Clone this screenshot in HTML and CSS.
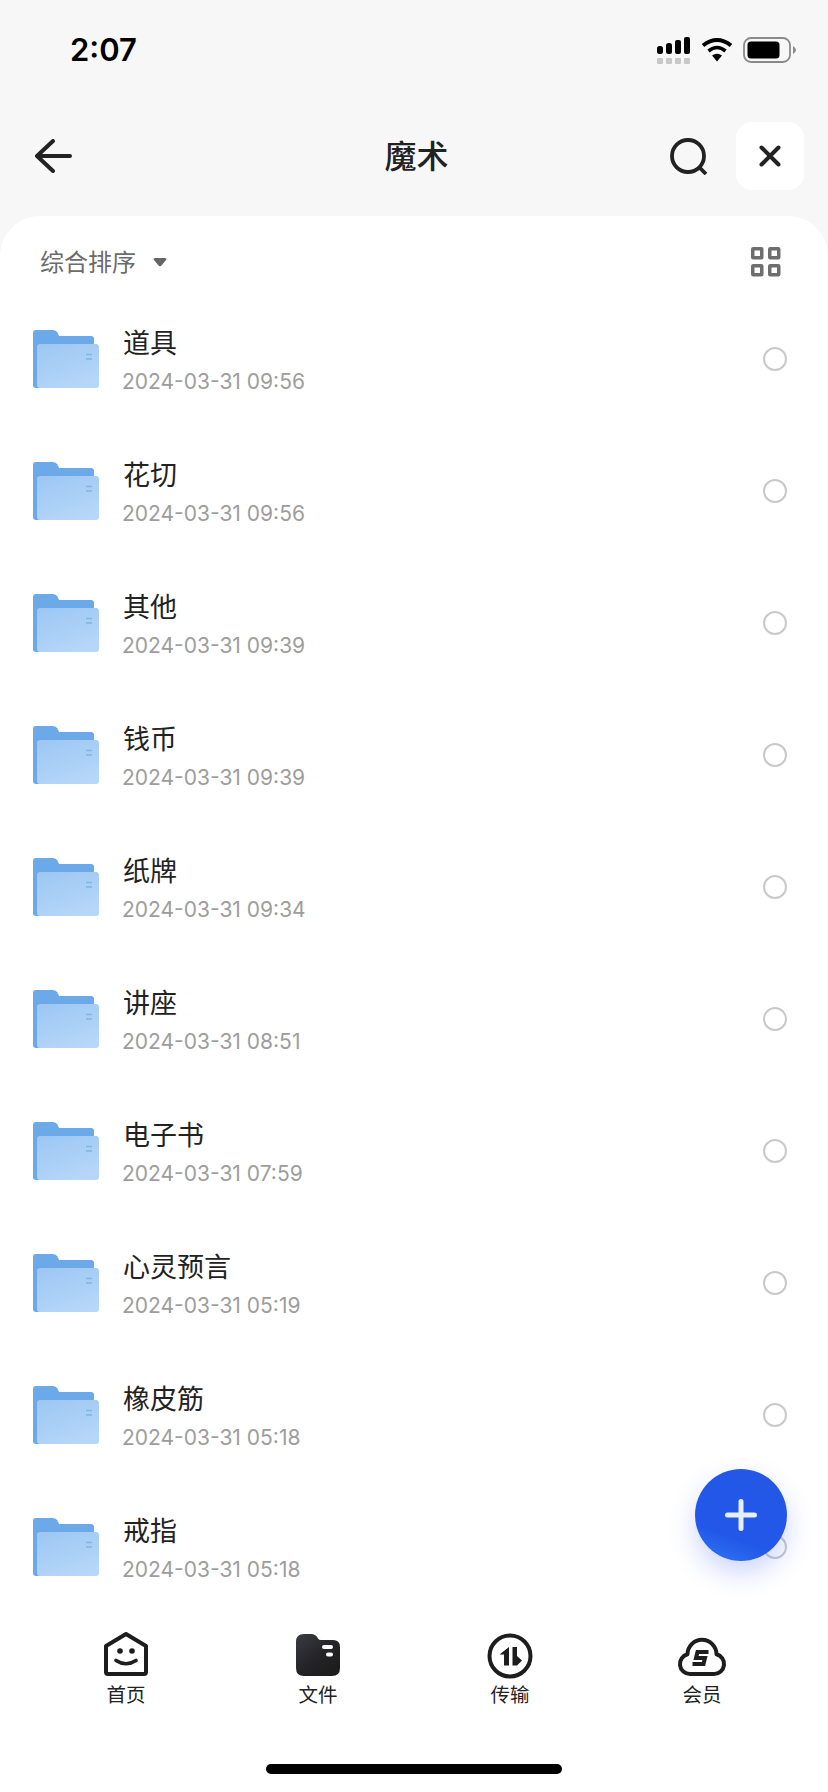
FILE: index.html
```html
<!DOCTYPE html>
<html lang="zh-CN">
<head>
    <meta charset="UTF-8">
    <meta name="viewport" content="width=device-width, initial-scale=1.0">
    <title>魔术</title>
    <link rel="stylesheet" href="styles.css">
</head>
<body>
    <svg class="defs" width="0" height="0" aria-hidden="true">
        <defs>
            <linearGradient id="folder-front" x1="0.2" y1="0" x2="0.7" y2="1">
                <stop offset="0" stop-color="#9ec8f3"/>
                <stop offset="1" stop-color="#b6d7f9"/>
            </linearGradient>
            <linearGradient id="tab-file" x1="0" y1="0" x2="0.8" y2="1">
                <stop offset="0" stop-color="#3a3b44"/>
                <stop offset="0.6" stop-color="#232326"/>
                <stop offset="1" stop-color="#1c1c1c"/>
            </linearGradient>
            <symbol id="folder" viewBox="0 0 66 58">
                <path d="M3 0H20Q23 0 24.500 2.500L26 6H58Q61 6 61 9V58H3Q0 58 0 55V3Q0 0 3 0Z" fill="#6ba9e9"/>
                <rect x="4" y="14" width="62" height="44" rx="3" fill="url(#folder-front)"/>
                <path d="M53 24.500H59M53 29H59" stroke="#84b3e4" stroke-width="1.400"/>
            </symbol>
        </defs>
    </svg>

    <div class="page">
        <div class="status-bar">
            <span class="time">2:07</span>
            <div class="status-icons">
                <svg width="34" height="27" viewBox="0 0 34 27">
                    <rect x="0" y="9" width="6" height="8" rx="2.500" fill="#000"/>
                    <rect x="9" y="6" width="6" height="11" rx="2.500" fill="#000"/>
                    <rect x="18" y="3" width="6" height="14" rx="2" fill="#000"/>
                    <rect x="27" y="0" width="6" height="17" rx="2" fill="#000"/>
                    <rect x="0" y="21" width="6" height="6" rx="1" fill="#c8c8c8"/>
                    <rect x="9" y="21" width="6" height="6" rx="1" fill="#c8c8c8"/>
                    <rect x="18" y="21" width="6" height="6" rx="1" fill="#c8c8c8"/>
                    <rect x="27" y="21" width="6" height="6" rx="1" fill="#c8c8c8"/>
                </svg>
                <svg width="32" height="25" viewBox="0 0 32 25">
                    <path d="M2 8.500Q16 -2.500 30 8.500" fill="none" stroke="#000" stroke-width="4"/>
                    <path d="M7.500 14Q16 7 24.500 14" fill="none" stroke="#000" stroke-width="3.600"/>
                    <path d="M11 18.500Q16 15 21 18.500L16 24.500Z" fill="#000"/>
                </svg>
                <svg width="53" height="26" viewBox="0 0 53 26">
                    <rect x="1" y="1" width="46" height="24" rx="7" fill="none" stroke="#8a8a8a" stroke-width="1.800"/>
                    <rect x="4.500" y="4.500" width="32" height="17" rx="3.500" fill="#000"/>
                    <path d="M50 9Q53 11 53 13Q53 15 50 17Z" fill="#8a8a8a"/>
                </svg>
            </div>
        </div>

        <div class="nav">
            <div class="nav-left">
                <svg width="38" height="34" viewBox="0 0 38 34">
                    <path d="M36 17H3M19 2L3 17L19 32" fill="none" stroke="#222" stroke-width="4" stroke-linecap="round" stroke-linejoin="round"/>
                </svg>
            </div>
            <div class="nav-title">魔术</div>
            <div class="nav-right">
                <svg width="38" height="38" viewBox="0 0 38 38">
                    <circle cx="18" cy="19" r="16" fill="none" stroke="#222" stroke-width="3.800"/>
                    <path d="M29 30L36 37" stroke="#222" stroke-width="3.800"/>
                </svg>
                <div class="close-btn">
                    <svg width="22" height="22" viewBox="0 0 22 22">
                        <path d="M2.500 2.500L19.500 19.500M19.500 2.500L2.500 19.500" stroke="#222" stroke-width="4" stroke-linecap="round"/>
                    </svg>
                </div>
            </div>
        </div>

        <div class="sheet">
            <div class="sort-row">
                <div class="sort">
                    <span>综合排序</span>
                    <svg width="14" height="10" viewBox="0 0 14 10">
                        <path d="M2 1H12Q14 1 13 3L8.500 8.500Q7 10 5.500 8.500L1 3Q0 1 2 1Z" fill="#666"/>
                    </svg>
                </div>
                <svg width="30" height="30" viewBox="0 0 30 30">
                    <g fill="none" stroke="#6e6e6e" stroke-width="3.500">
                        <rect x="1.750" y="1.750" width="9" height="9" rx="0.500"/>
                        <rect x="18.750" y="1.750" width="9" height="9" rx="0.500"/>
                        <rect x="1.750" y="18.750" width="9" height="9" rx="0.500"/>
                        <rect x="18.750" y="18.750" width="9" height="9" rx="0.500"/>
                    </g>
                </svg>
            </div>

            <div class="file-list">
                <div class="file-row">
                    <svg class="folder-icon"><use href="#folder"/></svg>
                    <div class="file-info"><div class="file-name">道具</div><div class="file-date">2024-03-31 09:56</div></div>
                    <div class="radio"></div>
                </div>
                <div class="file-row">
                    <svg class="folder-icon"><use href="#folder"/></svg>
                    <div class="file-info"><div class="file-name">花切</div><div class="file-date">2024-03-31 09:56</div></div>
                    <div class="radio"></div>
                </div>
                <div class="file-row">
                    <svg class="folder-icon"><use href="#folder"/></svg>
                    <div class="file-info"><div class="file-name">其他</div><div class="file-date">2024-03-31 09:39</div></div>
                    <div class="radio"></div>
                </div>
                <div class="file-row">
                    <svg class="folder-icon"><use href="#folder"/></svg>
                    <div class="file-info"><div class="file-name">钱币</div><div class="file-date">2024-03-31 09:39</div></div>
                    <div class="radio"></div>
                </div>
                <div class="file-row">
                    <svg class="folder-icon"><use href="#folder"/></svg>
                    <div class="file-info"><div class="file-name">纸牌</div><div class="file-date">2024-03-31 09:34</div></div>
                    <div class="radio"></div>
                </div>
                <div class="file-row">
                    <svg class="folder-icon"><use href="#folder"/></svg>
                    <div class="file-info"><div class="file-name">讲座</div><div class="file-date">2024-03-31 08:51</div></div>
                    <div class="radio"></div>
                </div>
                <div class="file-row">
                    <svg class="folder-icon"><use href="#folder"/></svg>
                    <div class="file-info"><div class="file-name">电子书</div><div class="file-date">2024-03-31 07:59</div></div>
                    <div class="radio"></div>
                </div>
                <div class="file-row">
                    <svg class="folder-icon"><use href="#folder"/></svg>
                    <div class="file-info"><div class="file-name">心灵预言</div><div class="file-date">2024-03-31 05:19</div></div>
                    <div class="radio"></div>
                </div>
                <div class="file-row">
                    <svg class="folder-icon"><use href="#folder"/></svg>
                    <div class="file-info"><div class="file-name">橡皮筋</div><div class="file-date">2024-03-31 05:18</div></div>
                    <div class="radio"></div>
                </div>
                <div class="file-row">
                    <svg class="folder-icon"><use href="#folder"/></svg>
                    <div class="file-info"><div class="file-name">戒指</div><div class="file-date">2024-03-31 05:18</div></div>
                    <div class="radio"></div>
                </div>
            </div>
        </div>

        <div class="tab-bar">
            <div class="tabs">
                <div class="tab">
                    <svg width="48" height="50" viewBox="0 0 48 50">
                        <path d="M24 5L44 17V43Q44 45 42 45H6Q4 45 4 43V17Z" fill="none" stroke="#1d1d1d" stroke-width="4" stroke-linejoin="round"/>
                        <circle cx="18" cy="22" r="2.800" fill="#1d1d1d"/>
                        <circle cx="30" cy="22" r="2.800" fill="#1d1d1d"/>
                        <path d="M14 31.500Q24 38 34 31.500" fill="none" stroke="#1d1d1d" stroke-width="3.600" stroke-linecap="round"/>
                    </svg>
                    <span>首页</span>
                </div>
                <div class="tab">
                    <svg width="48" height="50" viewBox="0 0 48 50">
                        <path d="M10 5H17Q22 5 24 9.500Q25 11 27 11H39Q46 11 46 18V39Q46 47 38 47H10Q2 47 2 39V13Q2 5 10 5Z" fill="url(#tab-file)"/>
                        <rect x="28" y="16" width="11" height="4" rx="2" fill="#fff"/>
                        <rect x="32" y="23.500" width="7" height="4" rx="2" fill="#fff"/>
                    </svg>
                    <span>文件</span>
                </div>
                <div class="tab">
                    <svg width="48" height="50" viewBox="0 0 48 50">
                        <circle cx="24" cy="27" r="20.500" fill="none" stroke="#1d1d1d" stroke-width="4"/>
                        <path d="M23 18V36.500H18V25.500H13.500Z" fill="#1d1d1d"/>
                        <path d="M26.500 18H31V27L36 31.500L31 36.500H26.500Z" fill="#1d1d1d"/>
                    </svg>
                    <span>传输</span>
                </div>
                <div class="tab">
                    <svg width="50" height="50" viewBox="0 0 50 50">
                        <path d="M13 45A10 10 0 0 1 10.500 25.300A14.500 14.500 0 0 1 39.500 25.300A10 10 0 0 1 37 45Z" fill="none" stroke="#1d1d1d" stroke-width="4" stroke-linejoin="round"/>
                        <path d="M31.500 23H20.500L19 29H28L26.500 35H15.500" fill="none" stroke="#1d1d1d" stroke-width="4"/>
                    </svg>
                    <span>会员</span>
                </div>
            </div>
            <div class="home-bar"></div>
        </div>

        <div class="fab">
            <svg width="32" height="32" viewBox="0 0 32 32">
                <path d="M16 2.500V29.500M2.500 16H29.500" stroke="#e6edfb" stroke-width="5" stroke-linecap="round"/>
            </svg>
        </div>
    </div>
</body>
</html>
```

FILE: styles.css
```css
/* Reset and Global Styling */
* {
    margin: 0;
    padding: 0;
    box-sizing: border-box;
}

body {
    font-family: "Noto Sans CJK SC", "Noto Sans", sans-serif;
    background: #f7f7f7;
    color: #222;
}

.defs {
    display: block;
    height: 0;
}

.page {
    position: relative;
    display: flex;
    flex-direction: column;
    width: 828px;
    height: 1792px;
    overflow: hidden;
}

/* Status bar */
.status-bar {
    display: flex;
    justify-content: space-between;
    align-items: flex-start;
    height: 122px;
    padding: 37px 32px 0 70px;
}

.time {
    font-family: Inter, sans-serif;
    font-size: 31px;
    font-weight: 600;
    line-height: 26px;
    color: #000;
}

.status-icons {
    display: flex;
    gap: 10px;
}

/* Header */
.nav {
    display: grid;
    grid-template-columns: 1fr auto 1fr;
    align-items: center;
    height: 68px;
    padding: 0 24px 0 29px;
    margin-bottom: 26px;
}

.nav-left {
    display: flex;
    align-items: center;
    padding-left: 5px;
}

.nav-title {
    margin-bottom: 4px;
    font-size: 32px;
    font-weight: 500;
    line-height: 40px;
}

.nav-right {
    display: flex;
    justify-content: flex-end;
    align-items: center;
    gap: 28px;
}

.close-btn {
    display: flex;
    justify-content: center;
    align-items: center;
    width: 68px;
    height: 68px;
    background: #fff;
    border-radius: 16px;
}

/* File list */
.sheet {
    flex: 1;
    min-height: 0;
    overflow: hidden;
    background: #fff;
    border-radius: 40px 40px 0 0;
}

.sort-row {
    display: flex;
    justify-content: space-between;
    align-items: center;
    height: 77px;
    padding: 14px 47px 0 40px;
}

.sort {
    display: flex;
    align-items: center;
    gap: 17px;
    font-size: 24px;
    color: #6b6b6b;
}

.sort span {
    padding-bottom: 2px;
}

.file-row {
    display: flex;
    align-items: center;
    height: 132px;
    padding: 0 41px 0 33px;
}

.folder-icon {
    flex: none;
    width: 66px;
    height: 58px;
}

.file-info {
    flex: 1;
    margin-left: 24px;
    padding-top: 2px;
}

.file-name {
    font-size: 27px;
    line-height: 38px;
    color: #222;
}

.file-date {
    margin: 6px 0 0 -1px;
    font-family: Inter, sans-serif;
    font-size: 21px;
    line-height: 30px;
    color: #9d9d9d;
}

.radio {
    flex: none;
    width: 24px;
    height: 24px;
    border: 2px solid #c9c9c9;
    border-radius: 50%;
}

/* Bottom tabs */
.tab-bar {
    height: 202px;
    padding-top: 39px;
    background: #fff;
}

.tabs {
    display: grid;
    grid-template-columns: repeat(4, 192px);
    padding: 0 30px;
}

.tab {
    display: flex;
    flex-direction: column;
    align-items: center;
    font-size: 19.500px;
    line-height: 24px;
    color: #222;
}

.tab span {
    margin-top: 3px;
}

.home-bar {
    width: 296px;
    height: 10px;
    margin: 58px auto 0;
    background: #000;
    border-radius: 5px;
}

/* Floating add button */
.fab {
    position: absolute;
    left: 695px;
    top: 1469px;
    display: flex;
    justify-content: center;
    align-items: center;
    width: 92px;
    height: 92px;
    border-radius: 50%;
    background: linear-gradient(200deg, #2457e6 0%, #2257e8 70%, #2f78f5 100%);
    box-shadow: 0 12px 26px rgba(60, 90, 250, 0.25);
}
```
